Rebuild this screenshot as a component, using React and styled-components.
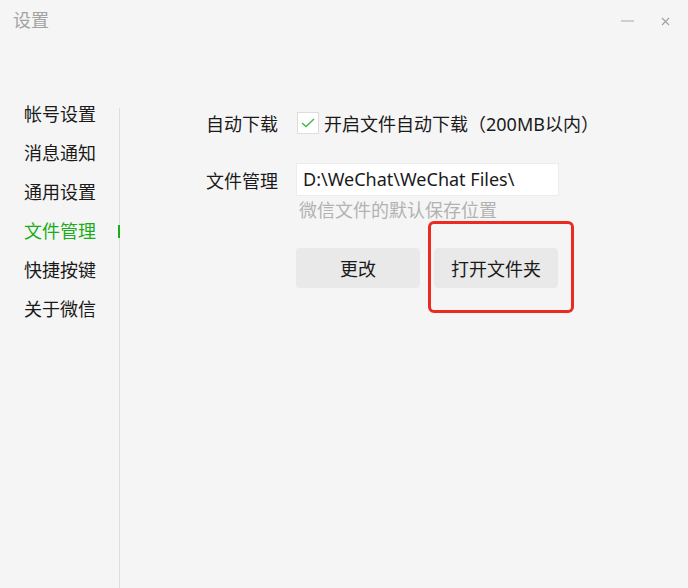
import React from 'react'
import styled, { createGlobalStyle } from 'styled-components'

const GlobalStyle = createGlobalStyle`
  html, body {
    margin: 0;
    padding: 0;
    background: #f5f5f5;
  }
  * {
    box-sizing: border-box;
  }
`

const Window = styled.div`
  width: 688px;
  height: 588px;
  background: #f5f5f5;
  display: flex;
  flex-direction: column;
  font-family: "Noto Sans", "Noto Sans CJK SC", sans-serif;
  color: #1a1a1a;
  overflow: hidden;
`

const TitleBar = styled.div`
  height: 95px;
  display: flex;
  align-items: flex-start;
  justify-content: space-between;
  padding: 8px 16px 0 13px;
`

const Title = styled.div`
  font-size: 18px;
  line-height: 24px;
  color: #a3a3a3;
`

const Controls = styled.div`
  display: flex;
  gap: 24px;
  padding-top: 8px;
`

const CtrlButton = styled.div`
  width: 14px;
  height: 10px;
  display: flex;
  align-items: center;
  justify-content: center;
`

const Body = styled.div`
  flex: 1;
  display: flex;
`

const Sidebar = styled.div`
  width: 120px;
  display: flex;
  flex-direction: column;
  position: relative;

  &::after {
    content: '';
    position: absolute;
    right: 0;
    top: 13px;
    bottom: 0;
    width: 1px;
    background: #dedede;
  }
`

const NavItem = styled.div`
  height: 39px;
  line-height: 39px;
  padding-left: 24px;
  font-size: 18px;
  color: ${p => (p.active ? '#1aad19' : '#1a1a1a')};
  position: relative;

  &::after {
    content: '';
    display: ${p => (p.active ? 'block' : 'none')};
    position: absolute;
    right: 0;
    top: 13px;
    width: 2px;
    height: 13px;
    background: #1aad19;
    z-index: 1;
  }
`

const Content = styled.div`
  flex: 1;
  padding: 16px 0 0 86px;
  display: flex;
  flex-direction: column;
`

const Row = styled.div`
  display: flex;
  align-items: center;
  height: ${p => p.h}px;
  margin-bottom: ${p => p.mb || 0}px;
`

const Label = styled.div`
  width: 90px;
  font-size: 18px;
  flex-shrink: 0;
`

const Check = styled.div`
  width: 22px;
  height: 22px;
  background: #fff;
  border: 1px solid #dddddd;
  display: flex;
  align-items: center;
  justify-content: center;
  margin: 0 5px 0 1px;
`

const CheckText = styled.div`
  font-size: 18px;
  white-space: nowrap;
`

const PathInput = styled.div`
  width: 263px;
  height: 33px;
  background: #fff;
  border: 1px solid #ececec;
  font-size: 18px;
  line-height: 31px;
  padding-left: 6px;
  white-space: nowrap;
`

const Hint = styled.div`
  margin-left: 93px;
  font-size: 18px;
  line-height: 24px;
  color: #b2b2b2;
  height: 24px;
`

const Buttons = styled.div`
  display: flex;
  gap: 14px;
  margin-top: 26px;
`

const Button = styled.div`
  width: 124px;
  height: 40px;
  border-radius: 4px;
  background: #e9e9e9;
  display: flex;
  align-items: center;
  justify-content: center;
  font-size: 18px;
  color: #1a1a1a;
`

const Highlight = styled.div`
  position: relative;

  &::after {
    content: '';
    position: absolute;
    left: -6px;
    right: -16px;
    top: -27px;
    bottom: -25px;
    border: 3px solid #ec2a22;
    border-radius: 6px;
  }
`

const items = ['帐号设置', '消息通知', '通用设置', '文件管理', '快捷按键', '关于微信']

export default function App() {
  return (
    <Window>
      <GlobalStyle />
      <TitleBar>
        <Title>设置</Title>
        <Controls>
          <CtrlButton>
            <svg width="13" height="2" viewBox="0 0 13 2">
              <rect x="0" y="0.5" width="13" height="1" fill="#a8a8a8" />
            </svg>
          </CtrlButton>
          <CtrlButton>
            <svg width="9" height="9" viewBox="0 0 9 9">
              <path d="M1 1L8 8M8 1L1 8" stroke="#a0a0a0" strokeWidth="1.1" fill="none" />
            </svg>
          </CtrlButton>
        </Controls>
      </TitleBar>
      <Body>
        <Sidebar>
          {items.map(t => (
            <NavItem key={t} active={t === '文件管理'}>{t}</NavItem>
          ))}
        </Sidebar>
        <Content>
          <Row h={24} mb={28}>
            <Label>自动下载</Label>
            <Check>
              <svg width="14" height="10" viewBox="0 0 14 10">
                <path d="M1 5L5 8.5L13 1" stroke="#3cb54a" strokeWidth="1.3" fill="none" />
              </svg>
            </Check>
            <CheckText>开启文件自动下载（200MB以内）</CheckText>
          </Row>
          <Row h={33} mb={2}>
            <Label>文件管理</Label>
            <PathInput>D:\WeChat\WeChat Files\</PathInput>
          </Row>
          <Hint>微信文件的默认保存位置</Hint>
          <Buttons>
            <Button style={{ marginLeft: 90 }}>更改</Button>
            <Highlight>
              <Button>打开文件夹</Button>
            </Highlight>
          </Buttons>
        </Content>
      </Body>
    </Window>
  )
}
